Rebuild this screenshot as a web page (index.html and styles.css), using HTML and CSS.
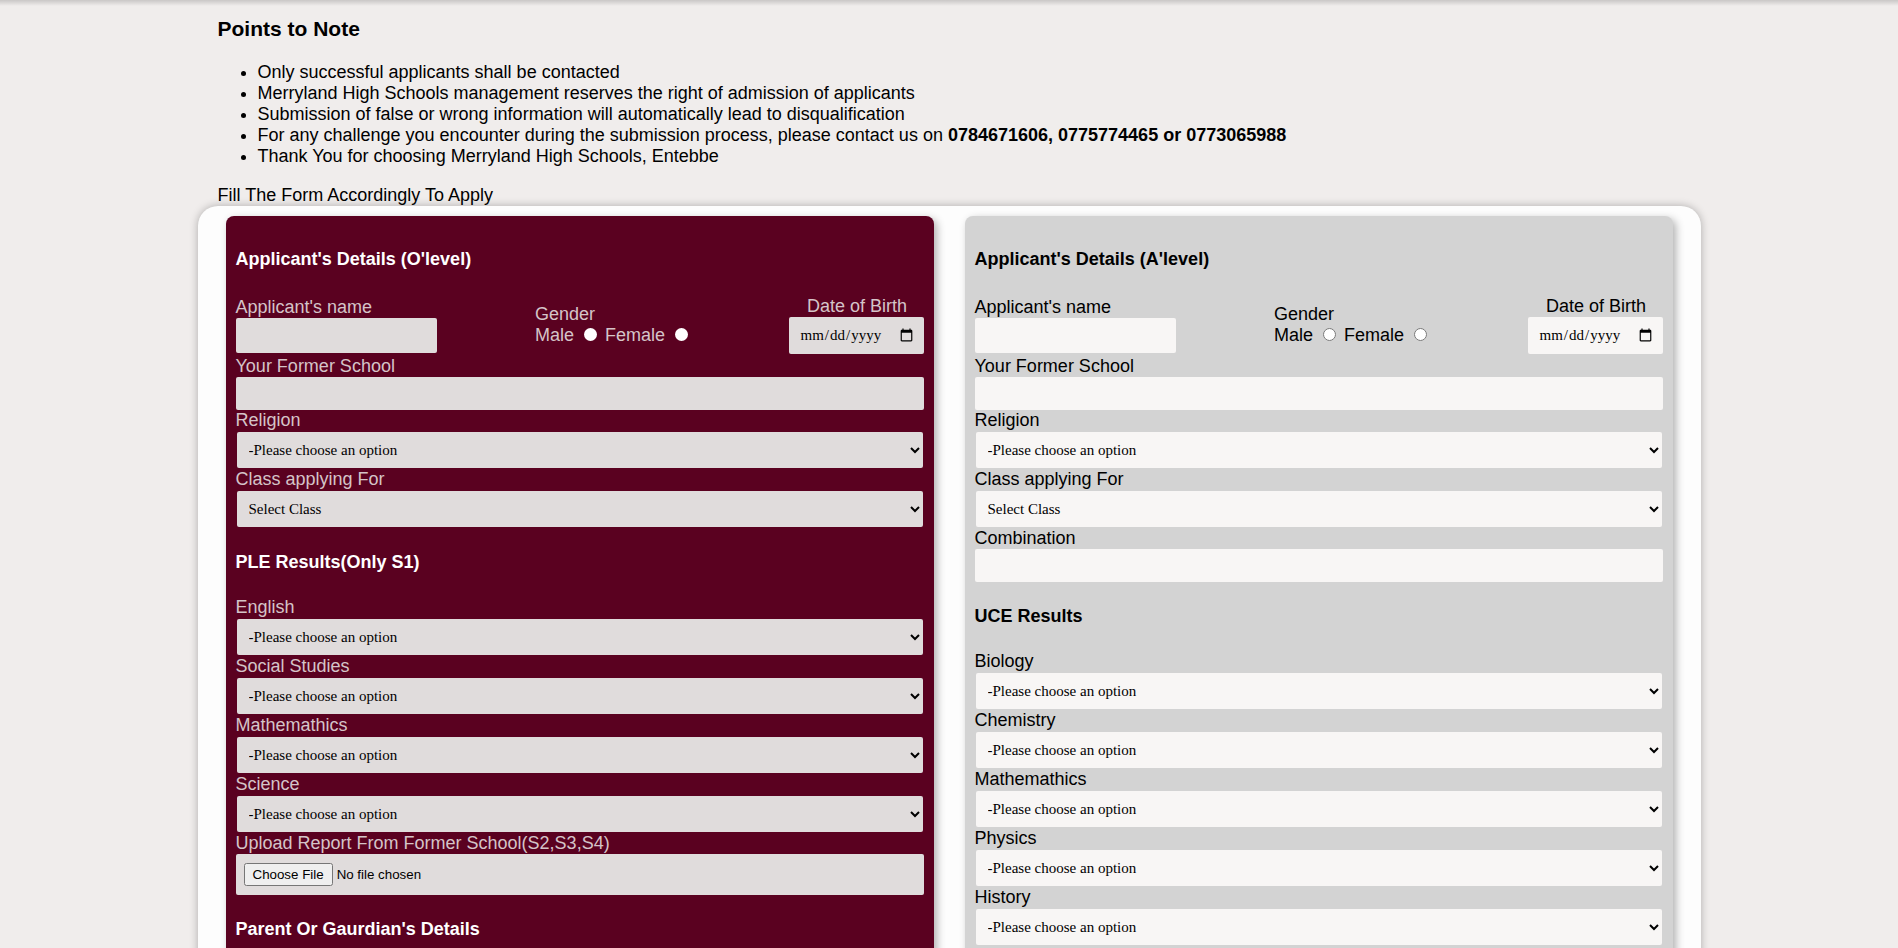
FILE: index.html
```html
<!DOCTYPE html>
<html lang="en">
<head>
<meta charset="utf-8">
<title>Merryland High Schools - Apply</title>
<link rel="stylesheet" href="styles.css">
</head>
<body>
<div class="top-shade"></div>
<main class="page">
  <section class="notes">
    <h3 class="notes-title">Points to Note</h3>
    <ul class="notes-list">
      <li>Only successful applicants shall be contacted</li>
      <li>Merryland High Schools management reserves the right of admission of applicants</li>
      <li>Submission of false or wrong information will automatically lead to disqualification</li>
      <li>For any challenge you encounter during the submission process, please contact us on <b>0784671606, 0775774465 or 0773065988</b></li>
      <li>Thank You for choosing Merryland High Schools, Entebbe</li>
    </ul>
    <p class="fill-note">Fill The Form Accordingly To Apply</p>
  </section>

  <form class="form-box">
    <div class="card card-olevel">
      <h4 class="card-title">Applicant's Details (O'level)</h4>
      <div class="top-row">
        <div class="field-name">
          <label class="lbl">Applicant's name</label>
          <input class="txt name-input" type="text">
        </div>
        <div class="gender">
          <div class="lbl">Gender</div>
          <div class="gender-opts">Male <input class="radio" type="radio" name="g1"> Female <input class="radio" type="radio" name="g1"></div>
        </div>
        <div class="dob">
          <label class="lbl">Date of Birth</label>
          <input class="date" type="date">
        </div>
      </div>
      <label class="lbl">Your Former School</label>
      <input class="txt" type="text">
      <label class="lbl">Religion</label>
      <select class="sel"><option>-Please choose an option</option></select>
      <label class="lbl">Class applying For</label>
      <select class="sel"><option>Select Class</option></select>

      <h4 class="card-title">PLE Results(Only S1)</h4>
      <label class="lbl">English</label>
      <select class="sel"><option>-Please choose an option</option></select>
      <label class="lbl">Social Studies</label>
      <select class="sel"><option>-Please choose an option</option></select>
      <label class="lbl">Mathemathics</label>
      <select class="sel"><option>-Please choose an option</option></select>
      <label class="lbl">Science</label>
      <select class="sel"><option>-Please choose an option</option></select>
      <label class="lbl">Upload Report From Former School(S2,S3,S4)</label>
      <input class="file" type="file">

      <h4 class="card-title">Parent Or Gaurdian's Details</h4>
      <label class="lbl">Parent's name</label>
      <input class="txt" type="text">
      <label class="lbl">Contact</label>
      <input class="txt" type="text">
    </div>

    <div class="card card-alevel">
      <h4 class="card-title">Applicant's Details (A'level)</h4>
      <div class="top-row">
        <div class="field-name">
          <label class="lbl">Applicant's name</label>
          <input class="txt name-input" type="text">
        </div>
        <div class="gender">
          <div class="lbl">Gender</div>
          <div class="gender-opts">Male <input class="radio" type="radio" name="g2"> Female <input class="radio" type="radio" name="g2"></div>
        </div>
        <div class="dob">
          <label class="lbl">Date of Birth</label>
          <input class="date" type="date">
        </div>
      </div>
      <label class="lbl">Your Former School</label>
      <input class="txt" type="text">
      <label class="lbl">Religion</label>
      <select class="sel"><option>-Please choose an option</option></select>
      <label class="lbl">Class applying For</label>
      <select class="sel"><option>Select Class</option></select>
      <label class="lbl">Combination</label>
      <input class="txt" type="text">

      <h4 class="card-title">UCE Results</h4>
      <label class="lbl">Biology</label>
      <select class="sel"><option>-Please choose an option</option></select>
      <label class="lbl">Chemistry</label>
      <select class="sel"><option>-Please choose an option</option></select>
      <label class="lbl">Mathemathics</label>
      <select class="sel"><option>-Please choose an option</option></select>
      <label class="lbl">Physics</label>
      <select class="sel"><option>-Please choose an option</option></select>
      <label class="lbl">History</label>
      <select class="sel"><option>-Please choose an option</option></select>
      <label class="lbl">Geography</label>
      <select class="sel"><option>-Please choose an option</option></select>
    </div>
  </form>
</main>
</body>
</html>
```

FILE: styles.css
```css
html, body {
  margin: 0;
  padding: 0;
}

body {
  background: #f0edec;
  color: #000;
  font-family: "Liberation Sans", Arial, sans-serif;
  font-size: 18px;
}

.top-shade {
  height: 6px;
  background: linear-gradient(to bottom, rgba(0, 0, 0, 0.16), rgba(0, 0, 0, 0));
}

.page {
  width: 1503px;
  margin: 0 auto;
}

.notes {
  padding-left: 20px;
}

.notes-title {
  font-size: 21px;
  font-weight: bold;
  margin: 11px 0 21px;
}

.notes-list {
  margin: 0 0 18px;
  padding-left: 40px;
}

.fill-note {
  margin: 0;
}

.form-box {
  display: flex;
  gap: 31px;
  margin-top: 0;
  padding: 10px 28px 40px;
  background: #fdfdfd;
  border-radius: 20px;
  box-shadow: 0 0 9px rgba(0, 0, 0, 0.28);
}

.card {
  flex: 1;
  display: flex;
  flex-direction: column;
  padding: 9px 10px 30px;
  border-radius: 8px;
  box-shadow: 3px 3px 8px rgba(0, 0, 0, 0.3);
}

.card-olevel {
  background: #5a0120;
  color: #d5c4c8;
}

.card-alevel {
  background: #d3d3d3;
  color: #000;
}

.card-title {
  font-size: 18px;
  font-weight: bold;
  margin: 24px 0;
  line-height: 21px;
}

.card-olevel .card-title {
  color: #fff;
}

.lbl {
  display: block;
  line-height: 21px;
}

.top-row {
  display: flex;
  justify-content: space-between;
  align-items: center;
  margin: 2px 0 2px;
}

.field-name {
  display: flex;
  flex-direction: column;
}

.gender-opts {
  line-height: 21px;
}

.dob {
  display: flex;
  flex-direction: column;
  align-items: center;
  margin-right: -1px;
}

.txt,
.date,
.sel,
.file {
  box-sizing: border-box;
  border: none;
  border-radius: 2px;
  font-family: "Liberation Serif", "Times New Roman", serif;
  font-size: 15px;
  color: #000;
  outline: none;
}

.card-olevel .txt,
.card-olevel .date,
.card-olevel .sel,
.card-olevel .file {
  background: #e0dcdc;
}

.card-alevel .txt,
.card-alevel .date,
.card-alevel .sel,
.card-alevel .file {
  background: #f8f6f5;
}

.txt {
  width: 100%;
  height: 33px;
  padding: 0 8px;
}

.name-input {
  width: 201px;
  height: 35px;
}

.date {
  width: 135px;
  height: 37px;
  padding: 0 8px 0 10px;
}

.sel {
  width: calc(100% - 2px);
  height: 36px;
  margin: 1px;
  padding: 0 8px;
}

.file {
  width: 100%;
  padding: 9px 8px;
  font-family: "Liberation Sans", Arial, sans-serif;
  font-size: 13.33px;
}

.file::file-selector-button {
  padding: 2px 7px;
}

.radio {
  margin: 3px 3px 0 5px;
  width: 13px;
  height: 13px;
}

.card-olevel .radio {
  appearance: none;
  -webkit-appearance: none;
  border-radius: 50%;
  background: #fff;
  border: none;
}
```
